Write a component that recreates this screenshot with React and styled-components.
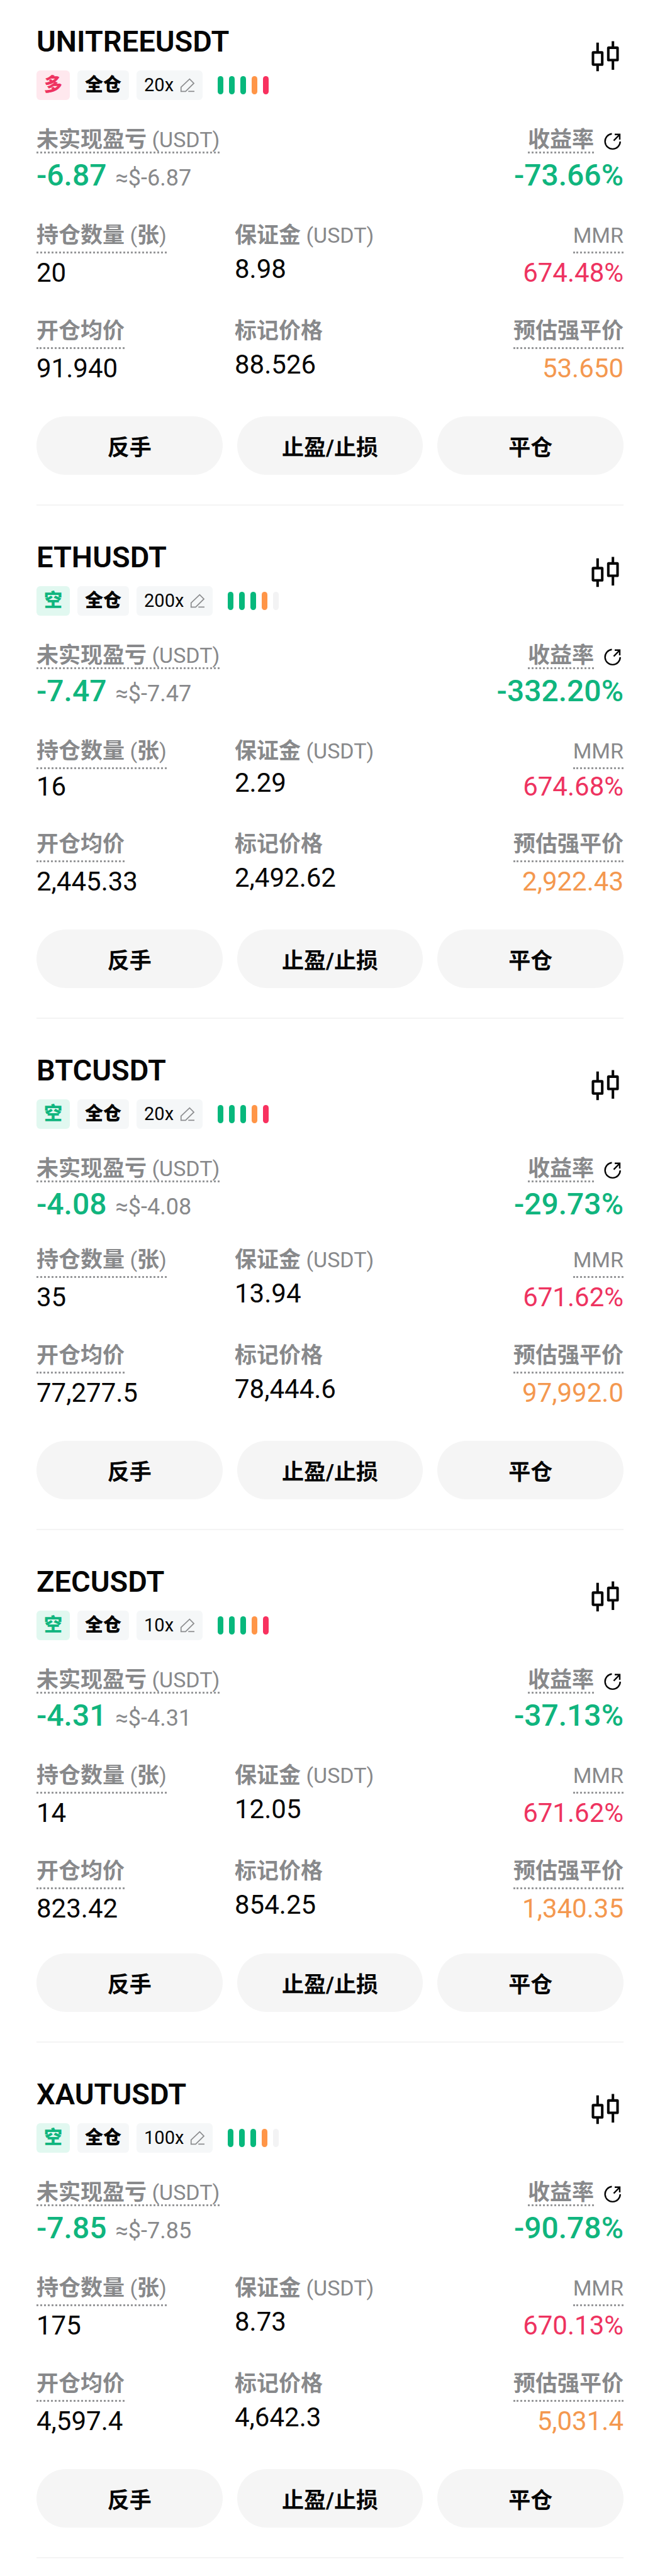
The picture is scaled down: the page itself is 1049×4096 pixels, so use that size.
// Packages:
import React from 'react';
import styled, { createGlobalStyle } from 'styled-components';


// Constants:
const COLORS = {
  BLACK: '#060606',
  GRAY: '#88898b',
  DOT: '#97989a',
  GREEN: '#10b57e',
  RED: '#ee3360',
  ORANGE: '#f4984f',
  BAR_GREEN: '#07b87c',
  BAR_ORANGE: '#ff9547',
  BAR_RED: '#f8315f',
  BAR_EMPTY: '#f3f3f4',
  TAG: '#f5f7f8',
  TAG_GREEN: '#e1f8f0',
  TAG_RED: '#ffe8ee',
  BUTTON: '#f5f5f5',
  DIVIDER: '#f4f4f4'
};

const FIVE_BARS = [ 'BAR_GREEN', 'BAR_GREEN', 'BAR_GREEN', 'BAR_ORANGE', 'BAR_RED' ];
const FOUR_BARS = [ 'BAR_GREEN', 'BAR_GREEN', 'BAR_GREEN', 'BAR_ORANGE', 'BAR_EMPTY' ];

const POSITIONS = [
  {
    symbol: 'UNITREEUSDT', side: 'long', leverage: '20x', bars: FIVE_BARS,
    pnl: '-6.87', pnlUSD: '≈$-6.87', roi: '-73.66%',
    size: '20', margin: '8.98', mmr: '674.48%',
    entry: '91.940', mark: '88.526', liquidation: '53.650'
  },
  {
    symbol: 'ETHUSDT', side: 'short', leverage: '200x', bars: FOUR_BARS,
    pnl: '-7.47', pnlUSD: '≈$-7.47', roi: '-332.20%',
    size: '16', margin: '2.29', mmr: '674.68%',
    entry: '2,445.33', mark: '2,492.62', liquidation: '2,922.43',
    spacing: { value: 4, rows: 49 }
  },
  {
    symbol: 'BTCUSDT', side: 'short', leverage: '20x', bars: FIVE_BARS,
    pnl: '-4.08', pnlUSD: '≈$-4.08', roi: '-29.73%',
    size: '35', margin: '13.94', mmr: '671.62%',
    entry: '77,277.5', mark: '78,444.6', liquidation: '97,992.0',
    spacing: { details: 43 }
  },
  {
    symbol: 'ZECUSDT', side: 'short', leverage: '10x', bars: FIVE_BARS,
    pnl: '-4.31', pnlUSD: '≈$-4.31', roi: '-37.13%',
    size: '14', margin: '12.05', mmr: '671.62%',
    entry: '823.42', mark: '854.25', liquidation: '1,340.35',
    spacing: { actions: 47 }
  },
  {
    symbol: 'XAUTUSDT', side: 'short', leverage: '100x', bars: FOUR_BARS,
    pnl: '-7.85', pnlUSD: '≈$-7.85', roi: '-90.78%',
    size: '175', margin: '8.73', mmr: '670.13%',
    entry: '4,597.4', mark: '4,642.3', liquidation: '5,031.4'
  }
];


// Styles:
const GlobalStyle = createGlobalStyle`
  * {
    box-sizing: border-box;
  }

  body {
    margin: 0;
    background: #fff;
    color: ${ COLORS.BLACK };
    font-family: Roboto, "Noto Sans CJK SC", sans-serif;
  }

  button {
    margin: 0;
    padding: 0;
    border: none;
    background: none;
    color: inherit;
    font: inherit;
    cursor: pointer;
  }

  svg {
    display: block;
  }
`;

const List = styled.main`
  padding: 0 58px 28px;
`;

const Card = styled.section`
  padding: 54px 0 47px;
  border-bottom: 2px solid ${ COLORS.DIVIDER };

  &:first-child {
    padding-top: 38px;
  }
`;

const Header = styled.header`
  display: flex;
  align-items: flex-start;
  justify-content: space-between;
`;

const Symbol = styled.h2`
  margin: 0 0 18px;
  font-weight: 600;
  font-size: 47px;
  line-height: 56px;
`;

const Tags = styled.div`
  display: flex;
  align-items: center;
  gap: 12px;
`;

const Tag = styled.span`
  display: flex;
  align-items: center;
  height: 47px;
  padding: 0 12px;
  border-radius: 6px;
  background: ${ props => COLORS[props.$background || 'TAG'] };
  color: ${ props => COLORS[props.$color || 'BLACK'] };
  font-weight: 900;
  font-size: 29px;
  line-height: 29px;
`;

const LeverageTag = styled(Tag)`
  gap: 10px;
  font-weight: 400;
`;

const Bars = styled.div`
  display: flex;
  gap: 9px;
  margin-left: 12px;
`;

const Bar = styled.i`
  width: 9px;
  height: 29px;
  border-radius: 5px;
  background: ${ props => COLORS[props.$color] };
`;

const ChartButton = styled.button`
  margin-top: 20px;
`;

const Summary = styled.div`
  display: flex;
  justify-content: space-between;
  margin-top: 45px;
`;

const Details = styled.div`
  display: grid;
  grid-template-columns: repeat(3, 1fr);
  gap: ${ props => props.$rows }px 12px;
  margin-top: ${ props => props.$top }px;
`;

const Cell = styled.div`
  display: flex;
  flex-direction: column;
  align-items: ${ props => props.$end ? 'flex-end' : 'flex-start' };
`;

const LabelRow = styled.div`
  display: flex;
  align-items: center;
  gap: 12px;
`;

const Label = styled.span`
  padding-bottom: ${ props => props.$tight ? 0 : props.$hint ? 7 : 4 }px;
  border-bottom: ${ props => props.$hint ? `3px dotted ${ COLORS.DOT }` : 'none' };
  color: ${ COLORS.GRAY };
  font-size: 34px;
  line-height: 37px;
  white-space: nowrap;
`;

const Han = styled.span`
  font-weight: 700;
  font-size: 35px;
  line-height: 35px;
`;

const Total = styled.div`
  display: flex;
  align-items: baseline;
  gap: 14px;
  margin-top: 8px;
  color: ${ COLORS.GREEN };
  font-weight: 500;
  font-size: 48px;
  line-height: 54px;
`;

const Converted = styled.span`
  color: ${ COLORS.GRAY };
  font-weight: 400;
  font-size: 36px;
  line-height: 35px;
`;

const Value = styled.div`
  margin-top: ${ props => props.$top }px;
  color: ${ props => COLORS[props.$color || 'BLACK'] };
  font-weight: 400;
  font-size: 42px;
  line-height: 48px;
`;

const Actions = styled.div`
  display: flex;
  gap: 23px;
  margin-top: ${ props => props.$top }px;
`;

const ActionButton = styled.button`
  flex: 1;
  height: 93px;
  border-radius: 47px;
  background: ${ COLORS.BUTTON };
  font-weight: 700;
  font-size: 35px;
`;


// Icons:
const EditIcon = () => (
  <svg width="24" height="23" viewBox="0 0 25 24" fill="none" stroke="#8c8d8f" strokeWidth="1.8">
    <path d="M1.8 22.2V15.2L16 1.8L23 8.8L9.3 22.2Z" />
    <path d="M13.8 22.2H24" />
  </svg>
);

const CandlesIcon = () => (
  <svg width="58" height="62" viewBox="0 0 60 64" fill="none" stroke="#060606" strokeWidth="4.2">
    <rect x="9.8" y="26.2" width="15.2" height="20" rx="0.6" />
    <path d="M17.4 10V25M17.4 47V57" />
    <rect x="35" y="18.4" width="15.2" height="20.4" rx="0.6" />
    <path d="M42.6 7.7V17M42.6 40V54.7" />
  </svg>
);

const ShareIcon = () => (
  <svg width="35" height="35" viewBox="0 0 36 36" fill="none" stroke="#060606" strokeWidth="2.5">
    <path d="M17 6A12.4 12.4 0 1 0 30.6 18.6" />
    <path d="M20 17L29.6 7.2M21.6 6.9H29.8V15.4" />
  </svg>
);


// Functions:
const Field = ({ label, unit, hint, end, color, gap, children }) => (
  <Cell $end={ end }>
    <Label $hint={ hint }>{ label }{ unit }</Label>
    <Value $top={ gap } $color={ color }>{ children }</Value>
  </Cell>
);

const Position = ({ position }) => {
  const isLong = position.side === 'long';
  const spacing = { value: 7, rows: 50, details: 50, actions: 52, ...position.spacing };

  return (
    <Card>
      <Header>
        <div>
          <Symbol>{ position.symbol }</Symbol>
          <Tags>
            <Tag $background={ isLong ? 'TAG_RED' : 'TAG_GREEN' } $color={ isLong ? 'RED' : 'GREEN' }>{ isLong ? '多' : '空' }</Tag>
            <Tag>全仓</Tag>
            <LeverageTag as="button" type="button">{ position.leverage }<EditIcon /></LeverageTag>
            <Bars>
              { position.bars.map((color, index) => <Bar key={ index } $color={ color } />) }
            </Bars>
          </Tags>
        </div>
        <ChartButton type="button" aria-label="K线"><CandlesIcon /></ChartButton>
      </Header>
      <Summary>
        <Cell>
          <Label $hint $tight><Han>未实现盈亏</Han> (USDT)</Label>
          <Total>{ position.pnl }<Converted>{ position.pnlUSD }</Converted></Total>
        </Cell>
        <Cell $end>
          <LabelRow>
            <Label $hint $tight><Han>收益率</Han></Label>
            <button type="button" aria-label="分享"><ShareIcon /></button>
          </LabelRow>
          <Total>{ position.roi }</Total>
        </Cell>
      </Summary>
      <Details $top={ spacing.details } $rows={ spacing.rows }>
        <Field label={ <Han>持仓数量</Han> } unit={ <> (<Han>张</Han>)</> } hint gap={ spacing.value }>{ position.size }</Field>
        <Field label={ <Han>保证金</Han> } unit=" (USDT)" gap={ spacing.value }>{ position.margin }</Field>
        <Field label="MMR" hint end color="RED" gap={ spacing.value }>{ position.mmr }</Field>
        <Field label={ <Han>开仓均价</Han> } hint gap={ 7 }>{ position.entry }</Field>
        <Field label={ <Han>标记价格</Han> } gap={ 7 }>{ position.mark }</Field>
        <Field label={ <Han>预估强平价</Han> } hint end color="ORANGE" gap={ 7 }>{ position.liquidation }</Field>
      </Details>
      <Actions $top={ spacing.actions }>
        <ActionButton type="button">反手</ActionButton>
        <ActionButton type="button">止盈/止损</ActionButton>
        <ActionButton type="button">平仓</ActionButton>
      </Actions>
    </Card>
  );
};

const App = () => (
  <>
    <GlobalStyle />
    <List>
      { POSITIONS.map(position => <Position key={ position.symbol } position={ position } />) }
    </List>
  </>
);


// Exports:
export default App;
